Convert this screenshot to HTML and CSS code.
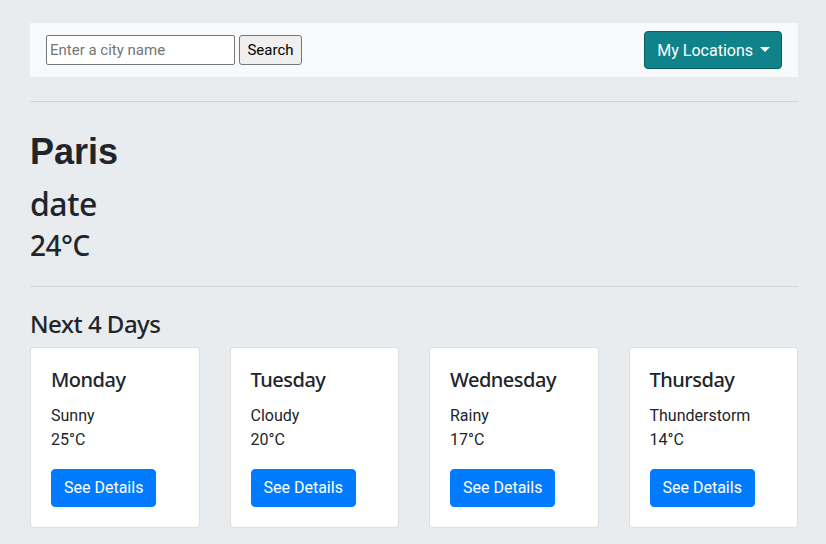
FILE: index.html
```html
<!DOCTYPE html>
<html lang="en">
<head>
<meta charset="utf-8">
<title>Weather</title>
<link rel="stylesheet" href="styles.css">
</head>
<body>
<div class="container">
  <nav class="navbar">
    <form class="search">
      <input class="search-input" type="text" placeholder="Enter a city name">
      <button class="search-btn" type="button">Search</button>
    </form>
    <button class="loc-btn" type="button">My Locations <span class="caret"></span></button>
  </nav>
  <hr class="rule">
  <section class="current">
    <h1 class="city">Paris</h1>
    <h2 class="date">date</h2>
    <h3 class="temp">24°C</h3>
  </section>
  <hr class="rule">
  <h4 class="next-title">Next 4 Days</h4>
  <div class="days">
    <div class="card">
      <h5 class="card-title">Monday</h5>
      <p class="card-text">Sunny</p>
      <p class="card-text">25°C</p>
      <button class="details-btn" type="button">See Details</button>
    </div>
    <div class="card">
      <h5 class="card-title">Tuesday</h5>
      <p class="card-text">Cloudy</p>
      <p class="card-text">20°C</p>
      <button class="details-btn" type="button">See Details</button>
    </div>
    <div class="card">
      <h5 class="card-title">Wednesday</h5>
      <p class="card-text">Rainy</p>
      <p class="card-text">17°C</p>
      <button class="details-btn" type="button">See Details</button>
    </div>
    <div class="card">
      <h5 class="card-title">Thursday</h5>
      <p class="card-text">Thunderstorm</p>
      <p class="card-text">14°C</p>
      <button class="details-btn" type="button">See Details</button>
    </div>
  </div>
</div>
</body>
</html>
```
FILE: styles.css
```css
* { box-sizing: border-box; }
html, body { margin: 0; padding: 0; }
body {
  background: #e9ecef;
  color: #212529;
  font-family: Roboto, "Noto Sans", sans-serif;
  font-size: 16px;
  line-height: 1.5;
}
.container {
  width: 768px;
  margin: 0 0 0 30px;
  padding-top: 23px;
}
.navbar {
  display: flex;
  align-items: center;
  justify-content: space-between;
  background: #f8f9fa;
  padding: 8px 16px;
  height: 54px;
}
.search { display: flex; align-items: center; gap: 4px; margin: 0; }
.search-input {
  width: 189px;
  height: 30px;
  border: 1px solid #767676;
  border-radius: 2px;
  padding: 1px 3px;
  font-family: Roboto, sans-serif;
  font-size: 15px;
  background: #fff;
}
.search-input::placeholder { color: #757575; }
.search-btn {
  height: 30px;
  width: 63px;
  border: 1px solid #767676;
  border-radius: 3px;
  background: #efefef;
  font-family: Roboto, sans-serif;
  font-size: 15px;
  color: #000;
  padding: 0 6px;
}
.loc-btn {
  height: 38px;
  padding: 0 11px 0 12px;
  background: #0f8389;
  border: 1px solid #0b5c60;
  border-radius: 4px;
  color: #fff;
  font-family: Roboto, sans-serif;
  font-size: 16px;
  display: flex;
  align-items: center;
  gap: 7px;
}
.caret {
  width: 0; height: 0;
  border-left: 5px solid transparent;
  border-right: 5px solid transparent;
  border-top: 5px solid #fff;
  margin-top: -2px;
}
.rule {
  border: 0;
  border-top: 1px solid rgba(0,0,0,.1);
  margin: 24px 0 16px;
}
.current { padding-top: 12px; }
.city {
  font-family: "Liberation Sans", Arial, sans-serif;
  font-weight: 700;
  font-size: 36px;
  line-height: 1.2;
  margin: 0 0 12px;
}
.date, .temp, .next-title, .card-title {
  font-family: "Noto Sans", Roboto, sans-serif;
  font-weight: 500;
  letter-spacing: -0.5px;
  line-height: 1.2;
}
.date {
  font-size: 32px;
  margin: 0 0 5px;
}
.temp {
  font-size: 28px;
  margin: 0;
}
.next-title {
  font-size: 24px;
  margin: 23px 0 8px;
}
.days {
  display: grid;
  grid-template-columns: repeat(4, 1fr);
  gap: 30px;
}
.card {
  background: #fff;
  border: 1px solid rgba(0,0,0,.125);
  border-radius: 4px;
  padding: 20px;
}
.card-title {
  font-size: 20px;
  margin: 0 0 12px;
}
.card-text {
  font-size: 16px;
  margin: 0;
}
.details-btn {
  margin-top: 17px;
  height: 38px;
  padding: 0 12px;
  background: #007bff;
  border: 1px solid #007bff;
  border-radius: 4px;
  color: #fff;
  font-family: Roboto, sans-serif;
  font-size: 16px;
}
```
